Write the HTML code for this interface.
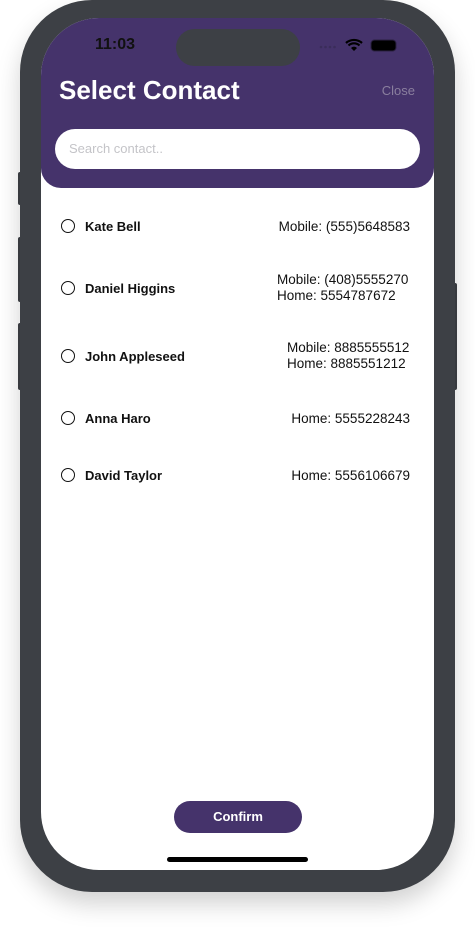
<!DOCTYPE html>
<html><head><style>
body{margin:0;width:475px;height:934px;background:#fff;position:relative;overflow:hidden;font-family:"Liberation Sans",sans-serif}
.btn{position:absolute;background:#3d4045;border-radius:2px}
.frame{position:absolute;left:20px;top:0;width:435px;height:892px;background:#3d4045;border-radius:72px;box-shadow:0 12px 24px rgba(0,0,0,.18)}
.screen{position:absolute;left:41px;top:18px;width:393px;height:852px;background:#fff;border-radius:58px;overflow:hidden}
.hdr{position:absolute;left:0;top:0;width:393px;height:170px;background:#45336b;border-radius:0 0 20px 20px}
.island{position:absolute;left:135px;top:11px;width:124px;height:37px;background:#3d4045;border-radius:19px}
.time{position:absolute;left:54px;top:18px;font-weight:bold;font-size:16px;color:#111}
.title{position:absolute;left:18px;top:57px;font-size:26px;font-weight:bold;color:#fff}
.close{position:absolute;right:19px;top:65px;font-size:13px;color:#8a7f9e}
.search{position:absolute;left:14px;top:111px;width:365px;height:40px;background:#fff;border-radius:20px;font-size:13px;color:#c4c4c8;line-height:40px;box-sizing:border-box;padding-left:14px}
.row{position:absolute;left:0;width:393px}
.r{position:absolute;left:20px;width:12px;height:12px;border:1.5px solid #111;border-radius:50%}
.n{position:absolute;left:44px;font-size:13px;font-weight:bold;color:#111}
.p{position:absolute;font-size:13.5px;color:#111;line-height:16px}
.confirm{position:absolute;left:133px;top:783px;width:128px;height:32px;background:#45336b;border-radius:16px;color:#fff;font-weight:bold;font-size:13px;text-align:center;line-height:32px}
.home{position:absolute;left:126px;top:839px;width:141px;height:5px;background:#000;border-radius:3px}
</style></head><body>
<div class="btn" style="left:18px;top:172px;width:4px;height:33px"></div>
<div class="btn" style="left:18px;top:237px;width:4px;height:65px"></div>
<div class="btn" style="left:18px;top:323px;width:4px;height:67px"></div>
<div class="btn" style="left:453px;top:283px;width:4px;height:107px"></div>
<div class="frame"></div>
<div class="screen">
<div class="hdr"></div>
<div class="island"></div>
<div class="time">11:03</div>
<svg style="position:absolute;left:278px;top:19px" width="80" height="16" viewBox="0 0 80 16">
<g fill="#3a2d5a"><circle cx="2" cy="10" r="1.3"/><circle cx="6.5" cy="10" r="1.3"/><circle cx="11" cy="10" r="1.3"/><circle cx="15.5" cy="10" r="1.3"/></g>
<path d="M27 6a12 12 0 0 1 16 0M29.5 8.5a8 8 0 0 1 11 0" stroke="#000" stroke-width="2.2" fill="none"/>
<path d="M32 11l3 3l3-3a4 4 0 0 0-6 0z" fill="#000"/>
<rect x="52" y="3" width="25" height="11" rx="3.5" fill="#000" stroke="#2a2040" stroke-width="1"/>
</svg>
<div class="title">Select Contact</div>
<div class="close">Close</div>
<div class="search">Search contact..</div>
<div class="row" style="top:201px"><div class="r"></div><div class="n">Kate Bell</div><div class="p" style="right:24px">Mobile: (555)5648583</div></div>
<div class="row" style="top:263px"><div class="r"></div><div class="n">Daniel Higgins</div><div class="p" style="left:236px;top:-9px">Mobile: (408)5555270<br>Home: 5554787672</div></div>
<div class="row" style="top:331px"><div class="r"></div><div class="n">John Appleseed</div><div class="p" style="left:246px;top:-9px">Mobile: 8885555512<br>Home: 8885551212</div></div>
<div class="row" style="top:393px"><div class="r"></div><div class="n">Anna Haro</div><div class="p" style="right:24px">Home: 5555228243</div></div>
<div class="row" style="top:450px"><div class="r"></div><div class="n">David Taylor</div><div class="p" style="right:24px">Home: 5556106679</div></div>
<div class="confirm">Confirm</div>
<div class="home"></div>
</div>
</body></html>
